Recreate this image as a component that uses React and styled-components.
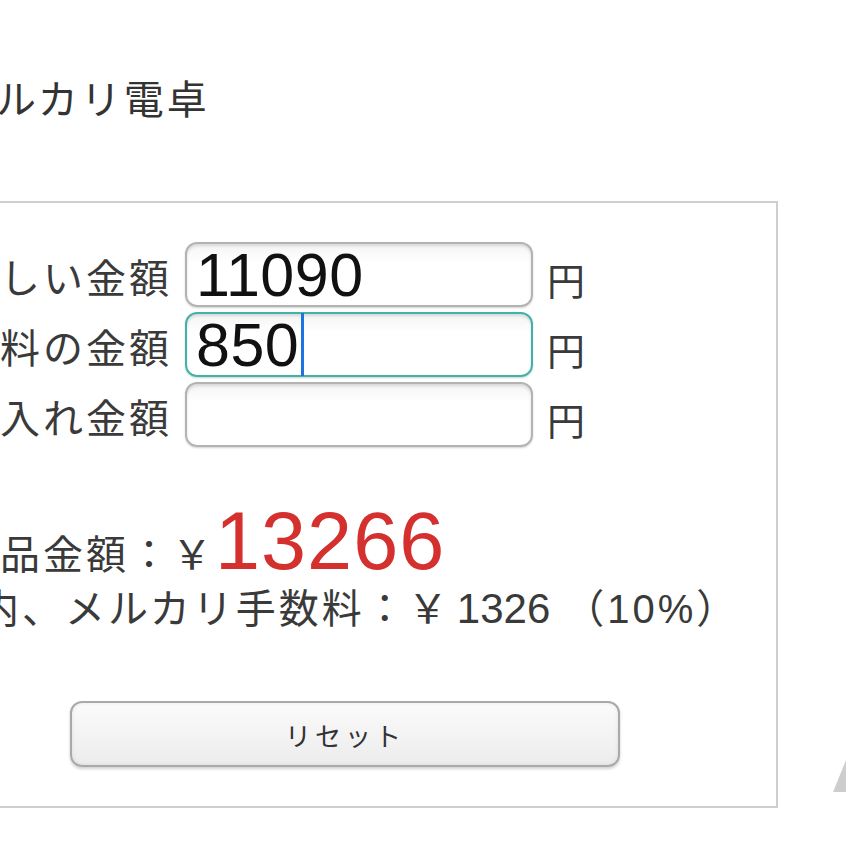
import React from "react";
import styled, { createGlobalStyle } from "styled-components";

const GlobalStyle = createGlobalStyle`
  html, body {
    margin: 0;
    padding: 0;
    background: #ffffff;
    overflow: hidden;
  }
  body {
    font-family: "Liberation Sans", "Noto Sans CJK JP", sans-serif;
    color: #3a3a3a;
  }
`;

const Viewport = styled.div`
  position: relative;
  width: 846px;
  height: 846px;
  overflow: hidden;
`;

// the screenshot is a zoomed phone view, so the page starts left of the frame
const Page = styled.div`
  margin-left: -62px;
  padding-top: 72px;
`;

const Title = styled.h1`
  margin: 0 0 73px 15px;
  font-size: 40px;
  line-height: 56px;
  font-weight: 400;
  letter-spacing: 3px;
  color: #333;
`;

const Box = styled.section`
  box-sizing: border-box;
  width: 840px;
  height: 607px;
  border: 2px solid #cfcfcf;
  padding: 39px 0 0 17px;
`;

const Form = styled.div`
  display: grid;
  grid-template-columns: 214px 348px auto;
  column-gap: 14px;
  row-gap: 5px;
  align-items: center;
`;

const Label = styled.span`
  font-size: 40px;
  letter-spacing: 3px;
  line-height: 50px;
  padding-top: 8px;
  white-space: nowrap;
  color: #3a3a3a;
`;

const Field = styled.div`
  box-sizing: border-box;
  height: 65px;
  display: flex;
  align-items: center;
  padding-left: 9px;
  border-radius: 12px;
  border: 2px solid ${(p) => (p.$focused ? "#3fb3aa" : "#b3b3b3")};
  background: linear-gradient(#f4f4f4, #ffffff 30%);
  box-shadow: inset 0 2px 3px rgba(0, 0, 0, 0.12), 0 1px 2px rgba(0, 0, 0, 0.18);
  font-family: "Liberation Sans", sans-serif;
  font-size: 61px;
  letter-spacing: 0.5px;
  color: #111;
`;

const Caret = styled.span`
  display: inline-block;
  width: 3px;
  height: 63px;
  margin-left: 2px;
  background: #1f73e0;
`;

const Unit = styled.span`
  font-size: 38px;
  padding-top: 8px;
  color: #3a3a3a;
`;

const Total = styled.div`
  height: 80px;
  margin-top: 54px;
  font-size: 40px;
  line-height: 80px;
  letter-spacing: 3px;
  white-space: nowrap;
`;

const Price = styled.span`
  font-size: 81px;
  letter-spacing: 1px;
  color: #d3302e;
`;

const Fee = styled.div`
  margin-left: -64px;
  font-size: 40px;
  line-height: 56px;
  letter-spacing: 3px;
  white-space: nowrap;
`;

const FeeAmount = styled.span`
  font-size: 42px;
  letter-spacing: 0;
  margin: 0 14px 0 6px;
`;

const ButtonRow = styled.div`
  display: flex;
  margin-top: 64px;
  padding-left: 113px;
`;

const ResetButton = styled.button`
  box-sizing: border-box;
  width: 550px;
  height: 66px;
  border-radius: 12px;
  border: 2px solid #a9a9a9;
  background: linear-gradient(#fbfbfb, #ececec);
  box-shadow: 0 2px 3px rgba(0, 0, 0, 0.18), inset 0 0 4px rgba(0, 0, 0, 0.08);
  font-family: "Noto Sans CJK JP", sans-serif;
  font-size: 26px;
  letter-spacing: 4px;
  color: #333;
`;

const Corner = styled.svg`
  position: absolute;
  right: 0;
  top: 760px;
`;

const rows = [
  { label: "新しい金額", value: "11090" },
  { label: "送料の金額", value: "850", focused: true },
  { label: "仕入れ金額", value: "" },
];

export default function App() {
  return (
    <Viewport>
      <GlobalStyle />
      <Page>
        <Title>メルカリ電卓</Title>
        <Box>
          <Form>
            {rows.map((r) => (
              <React.Fragment key={r.label}>
                <Label>{r.label}</Label>
                <Field $focused={r.focused}>
                  {r.value}
                  {r.focused && <Caret />}
                </Field>
                <Unit>円</Unit>
              </React.Fragment>
            ))}
          </Form>
          <Total>
            出品金額：￥<Price>13266</Price>
          </Total>
          <Fee>
            その内、メルカリ手数料：￥<FeeAmount>1326</FeeAmount>（10%）
          </Fee>
          <ButtonRow>
            <ResetButton>リセット</ResetButton>
          </ButtonRow>
        </Box>
      </Page>
      <Corner width="14" height="34" viewBox="0 0 14 34">
        <polygon points="14,0 14,32 1,32" fill="#cdcdcd" />
      </Corner>
    </Viewport>
  );
}
